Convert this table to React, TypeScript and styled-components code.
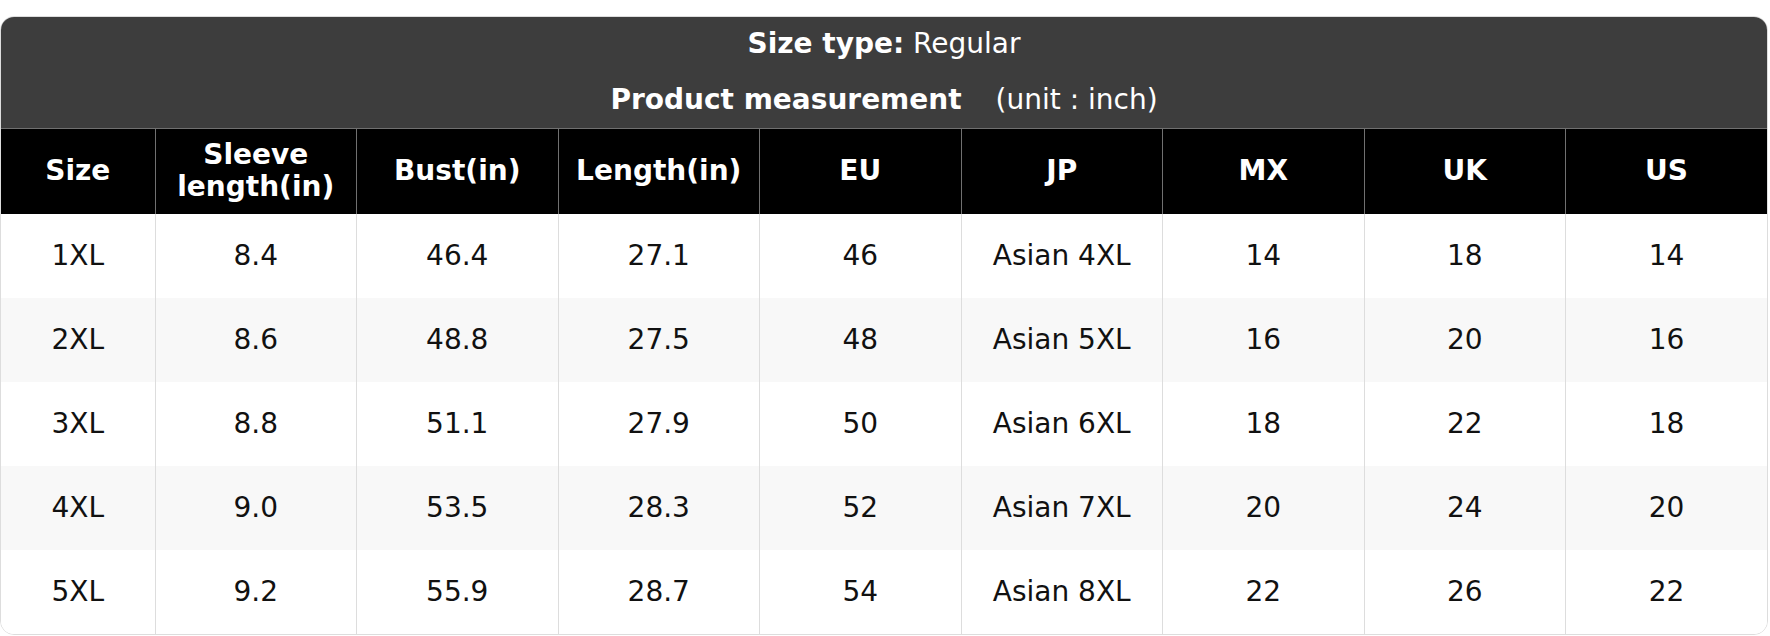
import React from "react";
import styled, { createGlobalStyle } from "styled-components";

const GlobalStyle = createGlobalStyle`
    html, body {
        margin: 0;
        padding: 0;
        background: #ffffff;
    }
    body {
        font-family: "DejaVu Sans", Verdana, sans-serif;
    }
    *, *::before, *::after {
        box-sizing: border-box;
    }
`;

const Page = styled.div`
    padding: 16px 2px 0 0;
`;

const Card = styled.div`
    border: 1px solid #dddddd;
    border-radius: 14px;
    overflow: hidden;
    background: #ffffff;
`;

const Caption = styled.div`
    background: #3d3d3d;
    color: #ffffff;
    display: flex;
    flex-direction: column;
    align-items: center;
    gap: 24px;
    padding: 11px 0 12px;
    font-size: 28px;
    line-height: 32px;
`;

const CaptionLine = styled.div`
    text-align: center;
`;

const Strong = styled.span`
    font-weight: 700;
`;

const Unit = styled.span`
    margin-left: 34px;
`;

const Table = styled.table`
    width: 100%;
    border-collapse: collapse;
    table-layout: fixed;
    font-size: 28px;
`;

const HeadCell = styled.th<{ $width?: number }>`
    width: ${(p) => (p.$width ? `${p.$width}px` : "auto")};
    height: 85px;
    padding: 0 8px;
    background: #000000;
    color: #ffffff;
    font-weight: 700;
    line-height: 32px;
    text-align: center;
    border: 1px solid #707070;
    border-bottom: none;
    &:first-child {
        border-left: none;
    }
    &:last-child {
        border-right: none;
    }
`;

const Row = styled.tr<{ $striped: boolean }>`
    background: ${(p) => (p.$striped ? "#f8f8f8" : "#ffffff")};
`;

const Cell = styled.td`
    height: 84px;
    padding: 0 8px;
    color: #111111;
    text-align: center;
    border-left: 1px solid #dddddd;
    &:first-child {
        border-left: none;
    }
`;

const headers = [
    "Size",
    "Sleeve length(in)",
    "Bust(in)",
    "Length(in)",
    "EU",
    "JP",
    "MX",
    "UK",
    "US",
];

const rows = [
    ["1XL", "8.4", "46.4", "27.1", "46", "Asian 4XL", "14", "18", "14"],
    ["2XL", "8.6", "48.8", "27.5", "48", "Asian 5XL", "16", "20", "16"],
    ["3XL", "8.8", "51.1", "27.9", "50", "Asian 6XL", "18", "22", "18"],
    ["4XL", "9.0", "53.5", "28.3", "52", "Asian 7XL", "20", "24", "20"],
    ["5XL", "9.2", "55.9", "28.7", "54", "Asian 8XL", "22", "26", "22"],
];

const App = () => {
    return (
        <Page>
            <GlobalStyle />
            <Card>
                <Caption>
                    <CaptionLine>
                        <Strong>Size type:</Strong> Regular
                    </CaptionLine>
                    <CaptionLine>
                        <Strong>Product measurement</Strong>
                        <Unit>(unit : inch)</Unit>
                    </CaptionLine>
                </Caption>
                <Table>
                    <thead>
                        <tr>
                            {headers.map((h, i) => (
                                <HeadCell key={h} $width={i === 0 ? 154 : undefined}>
                                    {h}
                                </HeadCell>
                            ))}
                        </tr>
                    </thead>
                    <tbody>
                        {rows.map((r, i) => (
                            <Row key={r[0]} $striped={i % 2 === 1}>
                                {r.map((v, j) => (
                                    <Cell key={j}>{v}</Cell>
                                ))}
                            </Row>
                        ))}
                    </tbody>
                </Table>
            </Card>
        </Page>
    );
};

export default App;
